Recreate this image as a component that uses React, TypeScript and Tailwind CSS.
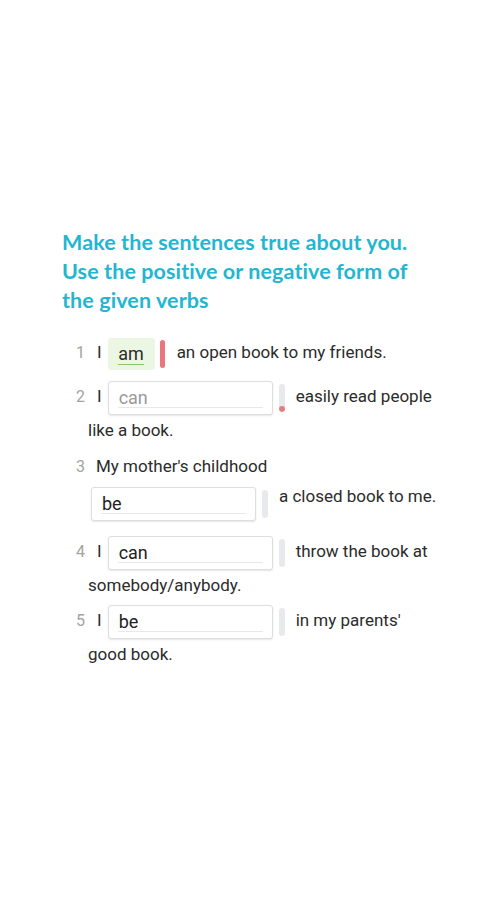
import React from "react";

const body = "font-['Roboto','Liberation_Sans',sans-serif]";

function Num({ n }: { n: number }) {
  return <span className="inline-block w-[21px] -ml-[12px] text-[16px] text-[#a3a3a3]">{n}</span>;
}

function Field({ value, placeholder }: { value?: string; placeholder?: string }) {
  return (
    <span className="inline-block align-middle h-[34px] w-[165px] rounded-[3px] border border-[#dedede] bg-white shadow-[0_1px_2px_rgba(0,0,0,0.10)]">
      <span
        className={`block mx-[9px] mt-[3px] h-[23px] border-b border-[#e8e8e8] pl-[1px] text-[18px] leading-[26px] ${
          value ? "text-[#222]" : "text-[#9a9a9a]"
        }`}
      >
        {value || placeholder}
      </span>
    </span>
  );
}

function Bar({ wrong }: { wrong?: boolean }) {
  return (
    <span className="inline-flex align-middle flex-col justify-end h-[28px] w-[6px] rounded-full bg-[#e7e9ed] overflow-hidden">
      {wrong && <span className="block h-[6px] w-full rounded-full bg-[#e57d80]" />}
    </span>
  );
}

export default function App() {
  return (
    <div className="min-h-screen bg-white pt-[228px]">
      <h1 className="pl-[62px] text-[21.5px] leading-[29px] font-bold text-[#22b6d1] font-['Lato','Noto_Sans',sans-serif] tracking-[0.1px]">
        Make the sentences true about you.
        <br />
        Use the positive or negative form of
        <br />
        the given verbs
      </h1>

      <div className={`mt-[19px] pl-[88px] pr-[30px] text-[17px] leading-[24px] text-[#2b2b2b] ${body}`}>
        {/* 1 */}
        <div className="mb-[4px]">
          <Num n={1} />
          <span>I</span>
          <span className="inline-flex align-middle items-center justify-center ml-[6px] my-[4px] h-[32px] w-[47px] rounded-[3px] bg-[#ebf7e2] text-[18px]">
            <span className="border-b border-[#8fc86a] leading-[20px]">am</span>
          </span>
          <span className="inline-block align-middle ml-[5px] h-[28px] w-[5px] rounded-full bg-[#e8787b]" />
          <span className="ml-[12px]">an open book to my friends.</span>
        </div>

        {/* 2 */}
        <div className="mb-[12px]">
          <Num n={2} />
          <span>I</span>
          <span className="inline-block ml-[6px] my-[3px] align-middle">
            <Field placeholder="can" />
          </span>
          <span className="ml-[6px] align-middle">
            <Bar wrong />
          </span>
          <span className="ml-[11px]">easily read people</span>
          <br />
          like a book.
        </div>

        {/* 3 */}
        <div className="mb-[12px]">
          <div>
            <Num n={3} />
            <span className="ml-[-1px]">My mother's childhood</span>
          </div>
          <div className="flex items-start mt-[8px] ml-[3px]">
            <Field value="be" />
            <span className="ml-[6px] mt-[3px] flex">
              <Bar />
            </span>
            <span className="ml-[11px] -mt-[3px]">a closed book to me.</span>
          </div>
        </div>

        {/* 4 */}
        <div className="mb-[5px]">
          <Num n={4} />
          <span>I</span>
          <span className="inline-block ml-[6px] my-[3px] align-middle">
            <Field value="can" />
          </span>
          <span className="ml-[6px] align-middle">
            <Bar />
          </span>
          <span className="ml-[11px]">throw the book at</span>
          <br />
          somebody/anybody.
        </div>

        {/* 5 */}
        <div>
          <Num n={5} />
          <span>I</span>
          <span className="inline-block ml-[6px] my-[3px] align-middle">
            <Field value="be" />
          </span>
          <span className="ml-[6px] align-middle">
            <Bar />
          </span>
          <span className="ml-[11px]">in my parents'</span>
          <br />
          good book.
        </div>
      </div>
    </div>
  );
}
